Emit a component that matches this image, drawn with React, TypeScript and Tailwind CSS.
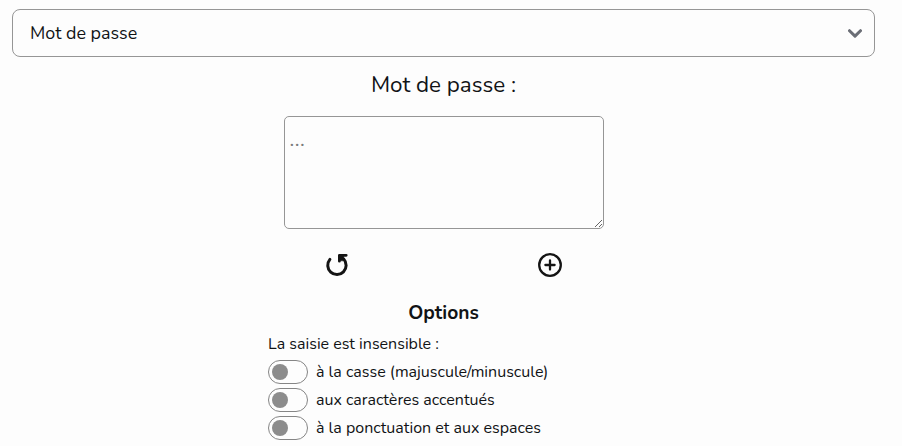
const options = [
  'à la casse (majuscule/minuscule)',
  'aux caractères accentués',
  'à la ponctuation et aux espaces',
];

function Toggle() {
  return (
    <span className="flex h-6 w-10 shrink-0 items-center rounded-full border border-[#858585] pl-[3px]">
      <span className="size-4 rounded-full bg-[#8c8c8c]" />
    </span>
  );
}

export default function App() {
  return (
    <div className="h-[446px] overflow-hidden bg-[#fdfdfd] pt-[9px] pl-3 font-['Nunito','Lato',sans-serif] text-[#111315]">
      <div className="flex w-[863px] flex-col items-center">
        <div className="flex h-12 w-full items-center justify-between rounded-lg border border-[#969696] pr-3 pl-[17px]">
          <span className="text-[17.9px]">Mot de passe</span>
          <svg className="h-[9px] w-[14px]" viewBox="0 0 14 9" fill="none" stroke="#6b6e76" strokeWidth="3" strokeLinecap="round" strokeLinejoin="round">
            <path d="M1.5 1.7 7 7.1l5.5-5.4" />
          </svg>
        </div>
        <h1 className="mt-2.5 h-9 text-[22.4px] leading-9">Mot de passe :</h1>
        <textarea
          placeholder="..."
          className="mt-[13px] block h-[113px] w-80 resize rounded-[5px] border border-[#969696] px-[5px] pt-[10px] text-[20.8px] leading-6 tracking-[0.5px] placeholder:text-[#7b7b7b]"
        />
        <div className="mt-6 flex h-6 w-80 items-center justify-between pr-[42px] pl-[41px]">
          <button>
            <svg className="size-6" viewBox="0 0 24 24" fill="none" stroke="#141414" strokeLinecap="round" strokeLinejoin="round">
              <path d="M4.9 6.4a9.2 9.2 0 1 0 13.8-.3" strokeWidth="3" />
              <path d="M14.4 8.2V2.3h6.8" strokeWidth="2.8" />
              <path d="M14.4 2.3h4l.8 4.2-2 1.6-2.8-1z" fill="#141414" strokeWidth=".5" />
            </svg>
          </button>
          <button>
            <svg className="size-6" viewBox="0 0 24 24" fill="none" stroke="#141414" strokeWidth="2.3" strokeLinecap="round">
              <circle cx="12" cy="12" r="10.8" />
              <path d="M12 7.4v9.2M7.4 12h9.2" />
            </svg>
          </button>
        </div>
        <h2 className="mt-[22px] h-7 text-[19.2px] leading-7 font-bold">Options</h2>
        <div className="mt-[5px] w-[351px] text-base leading-6">
          <p className="h-6">La saisie est insensible :</p>
          <div className="mt-1 flex flex-col gap-1">
            {options.map((label) => (
              <label key={label} className="flex h-6 items-center gap-2">
                <Toggle />
                <span>{label}</span>
              </label>
            ))}
          </div>
        </div>
      </div>
    </div>
  );
}
